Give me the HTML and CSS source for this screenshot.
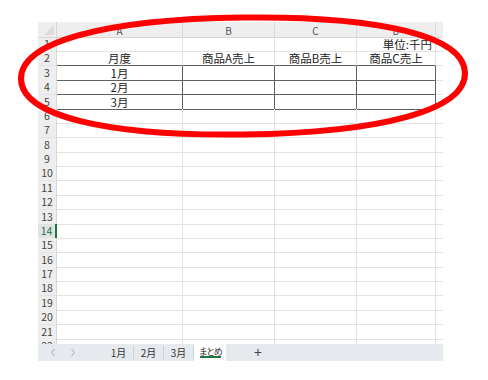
FILE: index.html
```html
<!DOCTYPE html>
<html lang="ja">
<head>
  <meta charset="UTF-8" />
  <title>まとめ</title>
  <link rel="stylesheet" href="styles.css">
</head>
<body>
  <div class="sheet">
    <div class="grid">
      <div class="row head">
        <div class="corner"></div>
        <div class="ch">A</div>
        <div class="ch">B</div>
        <div class="ch">C</div>
        <div class="ch">D</div>
        <div class="ch last"></div>
      </div>
      <div class="row"><div class="rh">1</div><div class="c"></div><div class="c"></div><div class="c"></div><div class="c right">単位:千円</div><div class="c last"></div></div>
      <div class="row"><div class="rh">2</div><div class="c tb">月度</div><div class="c tb">商品A売上</div><div class="c tb">商品B売上</div><div class="c tb">商品C売上</div><div class="c last"></div></div>
      <div class="row"><div class="rh">3</div><div class="c box">1月</div><div class="c box"></div><div class="c box"></div><div class="c box"></div><div class="c last"></div></div>
      <div class="row"><div class="rh">4</div><div class="c box">2月</div><div class="c box"></div><div class="c box"></div><div class="c box"></div><div class="c last"></div></div>
      <div class="row"><div class="rh">5</div><div class="c box">3月</div><div class="c box"></div><div class="c box"></div><div class="c box"></div><div class="c last"></div></div>
      <div class="row"><div class="rh">6</div><div class="c"></div><div class="c"></div><div class="c"></div><div class="c"></div><div class="c last"></div></div>
      <div class="row"><div class="rh">7</div><div class="c"></div><div class="c"></div><div class="c"></div><div class="c"></div><div class="c last"></div></div>
      <div class="row"><div class="rh">8</div><div class="c"></div><div class="c"></div><div class="c"></div><div class="c"></div><div class="c last"></div></div>
      <div class="row"><div class="rh">9</div><div class="c"></div><div class="c"></div><div class="c"></div><div class="c"></div><div class="c last"></div></div>
      <div class="row"><div class="rh">10</div><div class="c"></div><div class="c"></div><div class="c"></div><div class="c"></div><div class="c last"></div></div>
      <div class="row"><div class="rh">11</div><div class="c"></div><div class="c"></div><div class="c"></div><div class="c"></div><div class="c last"></div></div>
      <div class="row"><div class="rh">12</div><div class="c"></div><div class="c"></div><div class="c"></div><div class="c"></div><div class="c last"></div></div>
      <div class="row"><div class="rh">13</div><div class="c"></div><div class="c"></div><div class="c"></div><div class="c"></div><div class="c last"></div></div>
      <div class="row"><div class="rh active">14</div><div class="c"></div><div class="c"></div><div class="c"></div><div class="c"></div><div class="c last"></div></div>
      <div class="row"><div class="rh">15</div><div class="c"></div><div class="c"></div><div class="c"></div><div class="c"></div><div class="c last"></div></div>
      <div class="row"><div class="rh">16</div><div class="c"></div><div class="c"></div><div class="c"></div><div class="c"></div><div class="c last"></div></div>
      <div class="row"><div class="rh">17</div><div class="c"></div><div class="c"></div><div class="c"></div><div class="c"></div><div class="c last"></div></div>
      <div class="row"><div class="rh">18</div><div class="c"></div><div class="c"></div><div class="c"></div><div class="c"></div><div class="c last"></div></div>
      <div class="row"><div class="rh">19</div><div class="c"></div><div class="c"></div><div class="c"></div><div class="c"></div><div class="c last"></div></div>
      <div class="row"><div class="rh">20</div><div class="c"></div><div class="c"></div><div class="c"></div><div class="c"></div><div class="c last"></div></div>
      <div class="row"><div class="rh">21</div><div class="c"></div><div class="c"></div><div class="c"></div><div class="c"></div><div class="c last"></div></div>
      <div class="row cut"><div class="rh">22</div><div class="c"></div><div class="c"></div><div class="c"></div><div class="c"></div><div class="c last"></div></div>
    </div>

    <div class="tabbar">
      <span class="arrow"><svg width="6" height="9" viewBox="0 0 6 9"><path d="M4.5 1 L1.5 4.5 L4.5 8" fill="none" stroke="#a6a6a6" stroke-width="1"/></svg></span>
      <span class="arrow"><svg width="6" height="9" viewBox="0 0 6 9"><path d="M1.5 1 L4.5 4.5 L1.5 8" fill="none" stroke="#a6a6a6" stroke-width="1"/></svg></span>
      <span class="tab first">1月</span>
      <span class="tab">2月</span>
      <span class="tab">3月</span>
      <span class="tab current">まとめ</span>
      <span class="add">+</span>
    </div>
  </div>

  <!-- 赤い丸 -->
  <svg class="mark" width="488" height="380" viewBox="0 0 488 380">
    <path transform="rotate(-0.75 243 76)" fill="none" stroke="#ff0000" stroke-width="6"
          d="M465,76 C465,39.3 382.2,17.5 243,17.5 C103.8,17.5 21,39.3 21,76 C21,112.7 103.8,134.5 243,134.5 C382.2,134.5 465,112.7 465,76 Z"/>
  </svg>
</body>
</html>
```

FILE: styles.css
```css
body {
  margin: 0;
  width: 488px;
  height: 380px;
  background: #fff;
  font-family: "Noto Sans CJK JP", "Noto Sans", sans-serif;
  color: #222;
  position: relative;
  overflow: hidden;
}

.sheet {
  margin: 22px 0 0 38px;
  width: 405px;
}

.grid {
  display: flex;
  flex-direction: column;
}

.row {
  display: grid;
  grid-template-columns: 19px 126px 92px 82px 79px 7px;
  height: 14.38px;
}

.row.head {
  height: 15px;
}

.row.cut {
  height: 5px;
  overflow: hidden;
}

.corner {
  background: #eeeeee;
  border-right: 1px solid #d6d6d6;
  border-bottom: 1px solid #d6d6d6;
  position: relative;
}

.corner::after {
  content: "";
  position: absolute;
  right: 2px;
  bottom: 2px;
  border-left: 10px solid transparent;
  border-bottom: 10px solid #dcdcdc;
}

.ch {
  background: #eeeeee;
  border-right: 1px solid #dadada;
  border-bottom: 1px solid #d6d6d6;
  font-size: 10px;
  color: #555;
  text-align: center;
  line-height: 12px;
  padding-top: 3px;
  box-sizing: border-box;
}

.ch.last {
  border-right: none;
}

.rh {
  background: #eeeeee;
  border-right: 1px solid #d6d6d6;
  border-bottom: 1px solid #e4e4e4;
  font-size: 10.5px;
  color: #444;
  text-align: center;
  line-height: 14px;
  box-sizing: border-box;
}

.rh.active {
  background: #e2e2e2;
  color: #217346;
  border-right: 2px solid #217346;
}

.c {
  border-right: 1px solid #e2e2e2;
  border-bottom: 1px solid #e2e2e2;
  box-sizing: border-box;
  font-size: 11.5px;
  line-height: 14px;
  text-align: center;
  white-space: nowrap;
}

.c.last {
  border-right: none;
}

.c.right {
  text-align: right;
  padding-right: 3px;
}

.c.tb {
  border-bottom-color: #5f5f5f;
}

.c.box {
  border-bottom-color: #5f5f5f;
  border-right-color: #5f5f5f;
}

.tabbar {
  display: flex;
  align-items: center;
  height: 17px;
  padding-left: 5px;
  background: #e6e9ee;
  font-size: 10px;
  color: #333;
}

.arrow {
  width: 20px;
  display: flex;
  justify-content: center;
  align-items: center;
}

.tab {
  width: 29px;
  height: 13px;
  line-height: 13px;
  text-align: center;
  border-right: 1px solid #cbd0d7;
}

.tab.first {
  margin-left: 21px;
}

.tab.current {
  width: 32px;
  height: 17px;
  line-height: 15px;
  border-right: none;
  background: #fff;
  position: relative;
  font-size: 9px;
  letter-spacing: -1.5px;
}

.tab.current::after {
  content: "";
  position: absolute;
  left: 6px;
  right: 5px;
  bottom: 3px;
  height: 2px;
  background: #217346;
}

.add {
  margin-left: 22px;
  width: 20px;
  text-align: center;
  font-size: 14px;
  color: #444;
  line-height: 17px;
}

.mark {
  position: absolute;
  top: 0;
  left: 0;
  pointer-events: none;
}
```
